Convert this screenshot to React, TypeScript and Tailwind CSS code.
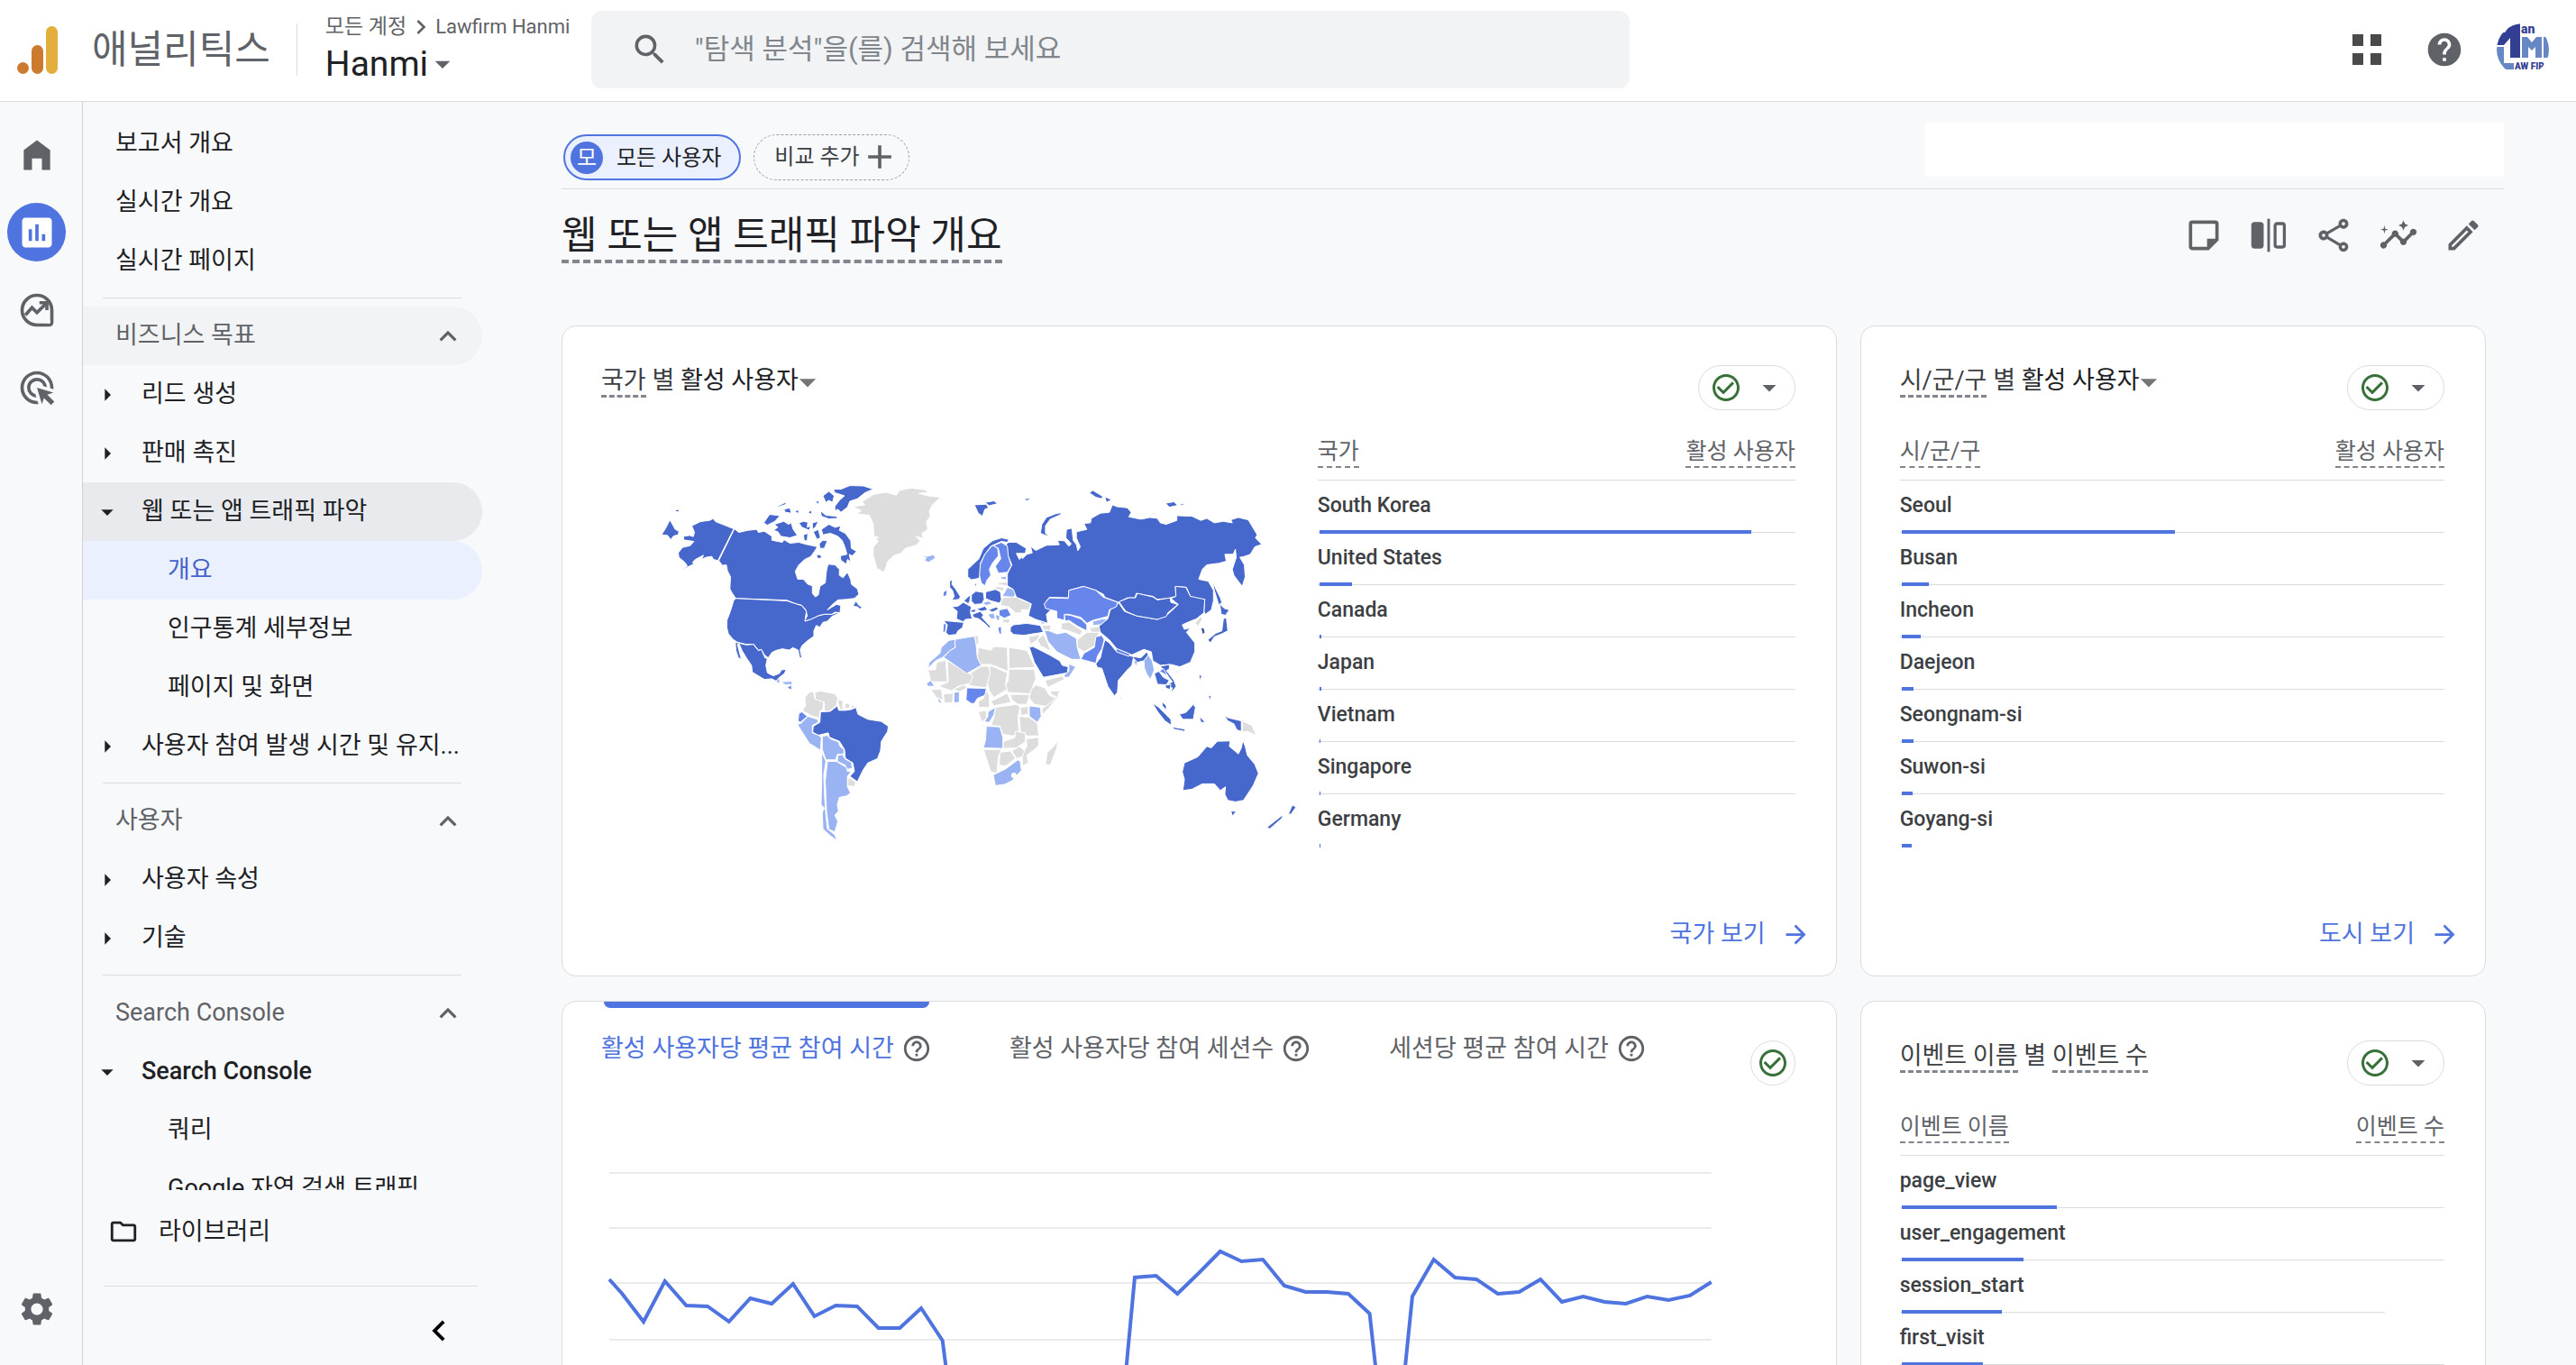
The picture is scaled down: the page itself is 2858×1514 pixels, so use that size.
import type { ReactNode } from 'react';
import {
  MdAdd,
  MdAdsClick,
  MdArrowDropDown,
  MdArrowForward,
  MdArrowRight,
  MdAssessment,
  MdCheckCircleOutline,
  MdChevronLeft,
  MdChevronRight,
  MdExpandLess,
  MdHelp,
  MdHelpOutline,
  MdInsights,
  MdOutlineEdit,
  MdOutlineFolder,
  MdOutlineShare,
  MdSearch,
  MdSettings,
} from 'react-icons/md';

type NavEntry = {
  label: string;
  kind: 'header' | 'group' | 'leaf' | 'top';
  open?: boolean;
  state?: 'selected' | 'parent' | 'hover';
};

type Row = { label: string; bar: number; short?: boolean };

// ── Navigation ──────────────────────────────────────────────────────────────

const NAV: NavEntry[][] = [
  [
    { label: '보고서 개요', kind: 'top' },
    { label: '실시간 개요', kind: 'top' },
    { label: '실시간 페이지', kind: 'top' },
  ],
  [
    { label: '비즈니스 목표', kind: 'header', state: 'hover' },
    { label: '리드 생성', kind: 'group' },
    { label: '판매 촉진', kind: 'group' },
    { label: '웹 또는 앱 트래픽 파악', kind: 'group', open: true, state: 'parent' },
    { label: '개요', kind: 'leaf', state: 'selected' },
    { label: '인구통계 세부정보', kind: 'leaf' },
    { label: '페이지 및 화면', kind: 'leaf' },
    { label: '사용자 참여 발생 시간 및 유지...', kind: 'group' },
  ],
  [
    { label: '사용자', kind: 'header' },
    { label: '사용자 속성', kind: 'group' },
    { label: '기술', kind: 'group' },
  ],
  [
    { label: 'Search Console', kind: 'header' },
    { label: 'Search Console', kind: 'group', open: true },
    { label: '쿼리', kind: 'leaf' },
    { label: 'Google 자연 검색 트래픽', kind: 'leaf' },
  ],
];

// ── Table data, bar = share of the table width in % ─────────────────────────

const COUNTRIES: Row[] = [
  { label: 'South Korea', bar: 90.4 },
  { label: 'United States', bar: 6.8 },
  { label: 'Canada', bar: 0.4 },
  { label: 'Japan', bar: 0.4 },
  { label: 'Vietnam', bar: 0.2 },
  { label: 'Singapore', bar: 0.2 },
  { label: 'Germany', bar: 0.2 },
];

const CITIES: Row[] = [
  { label: 'Seoul', bar: 50.2 },
  { label: 'Busan', bar: 5.1 },
  { label: 'Incheon', bar: 3.5 },
  { label: 'Daejeon', bar: 2.2 },
  { label: 'Seongnam-si', bar: 2.2 },
  { label: 'Suwon-si', bar: 2 },
  { label: 'Goyang-si', bar: 1.8 },
];

const EVENTS: Row[] = [
  { label: 'page_view', bar: 28.6 },
  { label: 'user_engagement', bar: 22.4 },
  { label: 'session_start', bar: 18.5, short: true },
  { label: 'first_visit', bar: 14.9 },
  { label: 'scroll', bar: 9 },
];

const TABS = [
  { label: '활성 사용자당 평균 참여 시간', active: true },
  { label: '활성 사용자당 참여 세션수', active: false },
  { label: '세션당 평균 참여 시간', active: false },
];

const TREND = [
  155, 186, 141, 168, 169, 186, 160, 166, 144, 180, 168, 169, 193, 193, 171, 207,
  390, 390, 390, 390, 390, 390, 390, 390,
  137, 135, 155, 132, 108, 119, 117, 146, 153, 153, 155, 177, 390,
  158, 117, 137, 139, 155, 153, 139, 164, 158, 164, 166, 158, 162, 157, 142,
];

// ── Map shapes ──────────────────────────────────────────────────────────────

const DARK  = '#4667cb';
const MID   = '#6686ec';
const LIGHT = '#9ab3f2';
const NONE  = '#dddddd';

const WEST: [string, string[]][] = [
  [DARK, [
    '130,230 148,262 160,268 158,280 142,284 133,296 122,282 102,280 116,258',
    '148,198 158,195 162,201 150,204',
    '203,250 232,236 262,232 275,226 282,236 343,260 290,366 275,362 270,352 250,355 236,362 242,348 215,362 205,372 212,376 188,388 160,402 188,384 180,372 160,355 158,340 172,322 198,316 210,302 196,300 176,297 176,285 196,282 208,286 212,272',
    '345,260 360,272 390,265 420,262 425,272 445,268 470,285 470,298 505,305 510,296 530,308 560,305 585,312 605,316 622,320 612,335 600,352 580,362 560,380 548,402 556,428 575,428 590,445 605,450 605,475 615,487 625,480 630,452 648,440 650,420 652,400 657,378 680,380 695,395 695,415 707,423 722,405 733,430 735,445 755,460 760,478 745,492 720,495 690,497 672,512 655,530 685,512 700,515 697,540 680,538 670,545 645,545 625,550 600,562 578,568 588,550 583,530 570,515 550,510 520,498 350,492 338,475 330,460 332,420 322,400 318,380 305,382 293,366',
    '350,492 520,500 550,510 570,516 585,535 580,568 600,562 625,550 645,545 670,545 685,540 693,542 670,552 655,568 640,572 630,588 618,582 610,600 610,618 590,632 570,650 564,664 570,690 563,690 557,664 540,656 528,664 505,660 485,665 470,672 458,690 445,680 435,662 425,665 410,645 385,645 355,638 340,628 325,610 320,590 320,565 328,545 338,515 342,500',
    '348,638 385,647 408,645 425,666 435,662 447,690 455,692 450,715 455,740 475,750 495,742 502,730 518,728 512,742 495,755 485,768 470,760 445,762 405,738 402,715 385,690 370,665 362,645 355,645 368,695 358,690 350,665',
    '740,518 750,500 760,515 770,520 765,528 755,520',
    '688,550 720,538 700,546',
    '675,128 700,128 730,116 775,117 808,128 780,140 755,160 730,168 722,188 700,205 690,195 680,200 680,185 695,165 712,150 680,140',
    '640,150 660,135 678,150 672,172 660,165 650,172',
    '443,240 462,212 497,216 480,235 455,248',
    '478,245 510,235 525,245 535,240 540,260 555,282 530,290 500,285 490,270 475,265 490,255',
    '635,262 660,245 680,255 700,250 695,265 715,275 733,300 735,325 752,335 738,350 728,345 733,370 722,362 718,378 700,365 698,350 720,345 715,325 705,300 690,285 665,275 640,280',
    '510,195 530,190 535,208 515,205',
    '488,185 515,172 518,178 492,187',
    '590,205 603,197 602,212',
    '632,200 650,215 685,218 690,225 660,227 635,218',
    '560,240 575,235 590,238 588,255 600,250 595,265 570,255',
    '545,205 558,195 560,208',
    '575,280 590,275 588,300 578,300',
    '605,240 625,235 615,255 605,262',
    '608,270 625,262 632,290 620,295',
    '615,170 628,165 625,178',
    '628,310 640,298 655,300 645,325 630,325',
    '618,350 628,345 638,355 625,360',
    '632,870 665,868 688,850 693,865 715,865 735,862 750,855 757,878 790,895 835,902 858,918 856,935 835,968 832,1000 822,1026 790,1040 775,1062 755,1103 730,1085 745,1068 740,1040 715,1025 712,995 695,968 662,955 658,940 625,948 606,938 608,918 630,905',
  ]],
  [MID, ['520,790 535,780 536,797', '560,875 570,870 588,885 565,905 557,900']],
  [LIGHT, [
    '485,765 495,757 497,772 488,775',
    '500,770 535,768 540,778 515,780',
    '967,348 985,352 1010,346 1015,358 992,372 978,365 985,358',
    '590,885 622,895 625,905 605,915 605,940 625,948 635,955 632,998 595,975 555,912 567,908',
    '638,952 655,948 665,960 692,970 697,985 710,995 710,1010 688,1012 683,1030 650,1030 638,995',
    '690,1015 705,1012 715,1028 735,1038 738,1058 720,1062 715,1048 688,1035',
    '636,1003 650,1035 643,1080 645,1140 648,1190 655,1260 680,1280 688,1300 665,1283 640,1260 638,1205 645,1190 634,1180 636,1100',
    '655,1035 685,1035 718,1055 722,1068 735,1068 722,1085 722,1120 732,1140 720,1150 695,1155 688,1180 692,1200 680,1215 690,1235 680,1270 660,1262 652,1200 648,1100',
  ]],
  [NONE, [
    '740,186 780,180 770,170 810,145 850,138 885,148 895,132 935,124 980,130 992,138 960,142 990,150 1033,155 1005,180 995,200 998,220 985,235 990,262 970,275 975,292 950,285 965,300 950,315 915,325 900,342 875,350 855,370 850,390 842,405 820,392 808,350 808,322 825,300 815,298 825,288 810,285 808,245 795,215 750,210 768,200',
    '598,802 610,805 612,825 642,835 640,862 630,868 628,890 605,885 572,866 582,850 580,822',
    '613,806 630,800 680,810 690,825 685,850 660,868 645,868 645,838 615,828',
    '693,828 708,835 705,850 712,862 698,862 690,840',
    '712,842 730,842 728,858 715,860',
    '733,842 748,855 738,860',
    '725,1088 750,1105 745,1120 722,1115',
  ]],
];

const EAST: [string, string[]][] = [
  [NONE, [
    '203,440 235,436 235,450 205,446',
    '200,452 225,455 220,468 195,460',
    '215,495 225,488 265,488 290,500 315,510 305,530 280,530 285,540 262,540 240,520 212,515',
    '218,562 245,560 240,575 220,572',
    '508,590 545,585 548,605 515,605',
    '415,575 440,570 485,600 478,615 440,600 415,595',
    '468,630 500,605 540,605 525,650 490,670 468,655',
    '335,630 355,612 370,640 380,668 345,650',
    '305,620 345,612 335,630 312,645',
    '360,765 420,750 425,762 370,788',
    '350,582 380,580 378,600 355,595',
    '608,815 617,825 612,830',
    '860,575 880,552 885,560 872,585',
    '1018,900 1050,915 1065,948 1035,935 1018,938',
    '125,618 138,615 140,640 132,650',
    '138,655 180,665 190,652 235,655 237,735 180,712 145,712 135,690',
    '240,655 300,665 328,722 240,725',
    '240,728 325,728 330,760 310,810 235,805 230,780 238,765',
    '178,715 235,740 228,780 235,795 190,822 175,800 168,770',
    '148,718 172,718 178,740 165,790 125,785 105,780 100,750',
    '-30,730 -5,730 0,705 30,698 35,770 -20,770',
    '35,700 120,750 110,775 70,785 50,800 20,790 5,785 38,770',
    '-20,795 15,795 20,830 0,825',
    '55,795 90,780 100,790 75,803',
    '22,810 55,808 52,840 25,840',
    '165,800 175,815 175,855 140,855 138,835 155,825',
    '180,835 235,808 248,838 190,850',
    '245,812 310,812 300,845 270,845 250,830',
    '330,780 360,790 375,815 398,825 365,852 325,845 308,825 315,795',
    '410,800 400,825 375,855 352,880 350,860 385,835 398,820 380,810 380,800',
    '278,855 305,852 305,878 280,882',
    '138,870 165,865 165,890 150,905',
    '195,855 265,845 278,855 270,890 275,945 250,950 220,945 210,918 180,915 190,890',
    '275,885 308,888 335,908 340,950 300,950 278,935',
    '220,970 260,955 262,935 295,940 295,970 265,990 222,992',
    '298,960 340,955 338,985 300,1015 305,1040 285,1050 285,1010 300,985',
    '250,1000 275,985 292,1000 285,1020 265,1025',
    '210,1005 245,1000 262,1025 230,1050 208,1048',
    '155,995 215,995 205,1020 200,1075 180,1070',
    '403,965 400,990 378,1048 362,1045 368,1005 390,985',
  ]],
  [LIGHT, [
    '212,420 232,418 232,430 215,428',
    '218,485 235,455 255,462 262,478 255,488',
    '150,508 172,500 185,510 165,515',
    '170,545 190,540 195,560 180,560',
    '195,545 210,550 208,568 198,562',
    '520,568 550,560 575,562 545,580 520,582',
    '358,598 375,600 400,610 430,605 465,625 468,655 480,695 450,695 420,680 400,670 370,635',
    '440,710 463,720 440,755 425,755 425,745 440,735',
    '305,650 312,650 308,668',
    '335,568 365,572 355,578',
    '655,700 670,698 665,718',
    '690,700 705,680 718,700 725,730 712,762 700,745 692,725',
    '40,632 60,628 62,655 45,665 20,688 -5,700 -30,725 -25,705 10,675 15,655',
    '60,640 62,628 125,618 130,640 135,690 148,715 100,742 22,688 45,665 62,655',
    '-35,775 -20,765 -8,785 -30,785',
    '57,805 75,803 75,838 57,840',
    '3,822 20,842 5,838',
    '308,850 345,855 348,885 335,905 308,885',
    '170,870 195,855 190,880 175,905 158,903 170,885',
    '165,918 210,920 220,955 220,992 155,990 162,965',
    '188,1080 230,1060 270,1030 278,1035 282,1065 250,1100 225,1112 195,1116',
  ]],
  [DARK, [
    '125,180 165,178 172,190 160,195 152,218 138,208',
    '160,172 190,167 203,176 175,183',
    '290,160 315,158 300,167',
    '415,206 412,213 378,228 362,250 362,275 375,287 345,275 350,245 365,222 395,210',
    '508,140 520,132 553,152 550,160 530,155',
    '560,153 583,163 565,172',
    '762,175 790,170 803,182 775,188',
    '810,176 832,178 815,182',
    '240,305 265,305 298,325 295,342 265,342 275,362 285,352 285,360 300,345 318,340 312,318 330,332 365,315 408,313 402,298 425,300 440,318 448,310 430,290 432,262 450,258 455,300 465,312 470,333 478,320 465,290 465,270 500,262 490,242 512,240 515,225 545,208 575,205 585,180 600,186 635,190 648,205 640,220 680,228 710,222 735,225 745,240 765,245 800,232 800,216 850,218 880,232 900,225 925,240 955,235 985,240 980,230 1005,222 1038,230 1068,280 1062,290 1083,312 1060,320 1045,345 1025,352 1010,355 1025,380 1028,420 1018,452 990,415 985,395 998,355 995,328 988,345 960,345 965,368 940,375 900,380 885,395 873,428 905,435 922,465 922,500 915,530 895,545 890,535 893,495 870,500 845,485 832,455 795,452 797,485 770,492 735,495 720,485 690,480 665,475 660,490 635,490 605,505 560,488 555,478 530,465 488,452 440,465 440,490 375,488 358,510 380,530 365,545 370,575 330,562 305,550 315,510 290,498 265,488 255,462 235,450 235,410 250,380 235,345 232,310',
    '918,432 930,460 945,490 950,505 940,515 925,465',
    '103,395 140,360 155,325 185,300 215,290 240,295 235,305 215,302 180,318 160,345 145,375 145,410 140,425 115,430 103,420',
    '163,470 195,462 212,470 215,495 210,508 180,500 162,492',
    '115,480 130,468 155,472 158,495 150,510 125,512 115,500',
    '50,520 70,518 88,505 115,520 112,540 118,560 95,562 88,570 65,560 68,535',
    '22,566 90,572 85,590 70,600 65,612 40,615 30,605 35,580',
    '42,435 52,430 50,445 62,460 78,485 75,495 50,498 58,485 52,465 43,455',
    '90,500 100,490 112,480 110,500 105,510',
    '118,545 145,535 155,548 150,555 178,585 175,592 165,580 140,560 122,555',
    '112,530 130,528 128,538 115,538',
    '130,528 160,518 170,530 150,535',
    '172,530 200,520 205,528 185,538',
    '245,590 255,580 300,575 345,582 355,605 320,610 290,615 255,612 245,602',
    '308,655 320,652 375,680 410,700 418,715 438,720 435,740 355,755 325,705',
    '530,710 545,690 552,660 560,630 575,640 595,665 650,685 680,690 700,670 705,680 690,700 668,705 655,690 650,715 635,730 605,765 602,805 592,817 570,785 555,740 550,725 535,722',
    '540,585 570,560 578,530 600,515 605,505 625,535 665,550 735,562 770,545 805,512 780,492 797,485 795,452 830,455 845,485 893,495 890,540 865,560 840,570 818,580 825,595 845,590 832,605 860,640 860,670 845,705 810,720 780,712 745,715 720,700 715,670 690,662 650,680 600,660 575,630 545,605',
    '607,503 640,490 662,490 668,475 720,487 735,497 778,490 780,505 803,512 770,540 765,552 735,562 665,550 630,535',
    '725,742 740,735 755,755 775,765 765,780 735,778',
    '745,718 775,712 775,728 765,732 790,765 798,785 780,808 785,790 765,785 775,775 785,770 755,730',
    '760,782 780,778 778,795 765,792',
    '750,835 765,850 765,865 752,850',
    '718,840 740,855 765,880 780,895 782,915 760,900 735,868',
    '785,920 828,928 826,935 790,928',
    '808,878 830,872 855,845 862,855 855,895 820,895',
    '875,885 895,905 880,905',
    '958,882 972,890 1015,900 1015,935 1000,930 990,910 970,900',
    '873,745 883,750 878,768',
    '905,815 915,818 910,832',
    '795,738 803,735 798,743',
    '955,560 965,555 970,600 950,610 925,620 912,640 903,630 930,608 950,600',
    '943,510 958,525 975,530 962,548 948,545',
    '820,1132 825,1095 818,1070 825,1040 870,1020 900,985 915,990 935,968 978,967 975,985 1005,1010 1015,990 1020,965 1028,985 1035,1015 1060,1045 1072,1075 1055,1115 1022,1165 995,1170 970,1165 960,1145 962,1120 945,1132 925,1110 885,1110 850,1128',
    '980,1200 998,1202 985,1218',
    '1172,1210 1185,1180 1197,1188 1180,1212',
    '1100,1255 1155,1212 1150,1225 1110,1260',
  ]],
  [MID, [
    '145,378 160,345 185,315 203,325 205,350 185,375 175,395 180,415 168,430 160,450 148,440 142,415',
    '188,316 215,305 235,318 238,350 248,382 235,405 205,408 195,385 213,360 205,325',
    '125,445 132,440 132,455',
    '22,575 32,578 28,605 20,605',
    '22,470 35,463 32,482 20,487',
    '208,530 235,525 248,548 225,558 207,548',
    '203,590 215,585 215,612 208,610',
    '358,510 375,490 438,492 440,465 490,452 530,465 555,488 603,505 598,520 575,530 570,552 520,565 500,575 480,555 440,545 425,545 425,565 400,558 400,535 380,530 362,525',
    '425,546 445,548 480,560 500,580 500,600 470,585 440,565 428,568',
    '480,695 490,675 525,655 530,620 550,615 558,630 550,660 535,685 530,708 500,700',
    '597,658 645,678 640,685 598,670',
    '742,735 755,725 770,750',
    '100,790 165,792 160,815 135,825 125,842 115,842 97,830',
  ]],
  ['#34489c', ['880,590 890,590 894,605 886,613']],
];

function Shapes({ layers }: { layers: [string, string[]][] }) {
  return (
    <>
      {layers.map(([fill, shapes]) => (
        <g key={fill} fill={fill}>
          {shapes.map((points) => <polygon key={points} points={points} />)}
        </g>
      ))}
    </>
  );
}

function WorldMap() {
  return (
    <svg viewBox="-99 0 2388 1380" className="w-full" role="img" aria-label="국가별 활성 사용자 지도">
      <g stroke="#ffffff" strokeWidth="3" strokeLinejoin="round">
        <Shapes layers={WEST} />
        <g transform="translate(1020 0)">
          <Shapes layers={EAST} />
          <circle cx="257" cy="1082" r="8" fill="#ffffff" />
        </g>
      </g>
    </svg>
  );
}

// ── Icons that the icon set lacks ───────────────────────────────────────────

function LogoMark() {
  return (
    <svg viewBox="0 0 45 53" className="h-[53px] w-[45px] shrink-0" aria-hidden="true">
      <rect x="32" y="0" width="13" height="53" rx="6.5" fill="#e4ae3c" />
      <rect x="16" y="21" width="13" height="32" rx="6.5" fill="#cc7a2f" />
      <circle cx="6.5" cy="46.5" r="6.5" fill="#cc7a2f" />
    </svg>
  );
}

function HomeIcon() {
  return (
    <svg viewBox="0 0 24 24" className="size-11" fill="currentColor" aria-hidden="true">
      <path d="M12 3 4 9v12h5v-7h6v7h5V9z" />
    </svg>
  );
}

function ExploreIcon() {
  return (
    <svg viewBox="0 0 24 24" className="size-11" fill="none" stroke="currentColor" strokeWidth="2" aria-hidden="true">
      <path d="M21 12a9 9 0 1 0-9 9h7.500a1.500 1.500 0 0 0 1.500-1.500z" />
      <path d="m5 15 4-4.500 3 3L17.500 8" />
      <path d="M13.500 7.500h4.500V12" />
      <circle cx="19" cy="19" r="1.200" fill="#f8f9fb" stroke="none" />
    </svg>
  );
}

function NoteIcon() {
  return (
    <svg viewBox="0 0 24 24" className="size-11" fill="currentColor" aria-hidden="true">
      <path d="M19 5v9h-5v5H5V5h14m0-2H5a2 2 0 0 0-2 2v14c0 1.100.9 2 2 2h10l6-6V5a2 2 0 0 0-2-2z" />
    </svg>
  );
}

function CompareIcon() {
  return (
    <svg viewBox="0 0 24 24" className="size-11" fill="currentColor" aria-hidden="true">
      <rect x="1.500" y="4" width="7.500" height="16" rx="2" />
      <rect x="11.200" y="2" width="1.600" height="20" />
      <rect x="15.900" y="4.900" width="5.600" height="14.200" rx="1.200" fill="none" stroke="currentColor" strokeWidth="1.800" />
    </svg>
  );
}

function Avatar() {
  return (
    <svg viewBox="0 0 58 58" className="size-[58px]" role="img" aria-label="Hanmi Law Firm">
      <defs>
        <clipPath id="avatar-clip"><circle cx="29" cy="29" r="29" /></clipPath>
      </defs>
      <g clipPath="url(#avatar-clip)">
        <rect width="58" height="58" fill="#ffffff" />
        <path d="M15 2 26 0v38H15V16L8 24H0V10h9z" fill="#333f92" />
        <path d="M0 26h8v18h11v7H0z" fill="#6787c2" />
        <path d="M28 15h6l5 6 5-6h6v23h-7V26l-4 4-4-4v12h-7zM52 15h6v23h-6z" fill="#6787c2" />
        <text x="27" y="11" className="font-['Roboto',sans-serif] text-[14px] font-black" fill="#333f92">an</text>
        <text x="20" y="51" className="font-['Roboto',sans-serif] text-[10px] font-black" fill="#333f92">AW FIR</text>
      </g>
    </svg>
  );
}

// ── Layout parts ────────────────────────────────────────────────────────────

function TopBar() {
  return (
    <header className="flex h-[113px] shrink-0 items-center border-b border-[#dadce0] bg-white pr-[30px] pb-0.5 pl-[19px]">
      <LogoMark />
      <span className="ml-[38px] shrink-0 text-[43px] leading-[54px] text-[#5f6368]">애널리틱스</span>
      <div className="mr-[31px] ml-[29px] h-[58px] w-px bg-[#dadce0]" />
      <div className="w-[295px] shrink-0 whitespace-nowrap">
        <div className="flex items-center text-[23px] leading-7 text-[#5f6368]">
          모든 계정
          <MdChevronRight className="size-8" />
          <span className="text-[22px]">Lawfirm Hanmi</span>
        </div>
        <button className="flex items-center text-[39px] leading-[50px] text-[#202124]">
          Hanmi
          <MdArrowDropDown className="size-10 -ml-1 text-[#5f6368]" />
        </button>
      </div>
      <label className="flex h-[86px] max-w-[1152px] flex-1 items-center rounded-xl bg-[#f1f3f4] px-[43px]">
        <MdSearch className="size-11 text-[#5f6368]" />
        <input
          type="search"
          aria-label="검색"
          placeholder={'"탐색 분석"을(를) 검색해 보세요'}
          className="ml-7 flex-1 bg-transparent text-[31px] outline-none placeholder:text-[#80868b]"
        />
      </label>
      <div className="ml-auto flex items-center">
        <button aria-label="앱" className="mr-12">
          <svg viewBox="0 0 32 34" className="h-[34px] w-8" fill="#4a4a4a" aria-hidden="true">
            <path d="M0 0h12v13H0zM20 0h12v13H20zM0 21h12v13H0zM20 21h12v13H20z" />
          </svg>
        </button>
        <button aria-label="도움말" className="mr-9"><MdHelp className="size-11 text-[#5f6368]" /></button>
        <button aria-label="계정"><Avatar /></button>
      </div>
    </header>
  );
}

function Rail() {
  return (
    <nav className="flex w-[92px] shrink-0 flex-col items-center border-r border-[#cfd1d4] pt-[26px] pr-2.5 pb-[30px] text-[#5f6368]">
      <a href="#home" aria-label="홈" className="flex size-[65px] items-center justify-center"><HomeIcon /></a>
      <a href="#reports" aria-label="보고서" className="mt-[21px] flex size-[65px] items-center justify-center rounded-full bg-[#4f73df] text-white">
        <MdAssessment className="size-11" />
      </a>
      <a href="#explore" aria-label="탐색" className="mt-[21px] flex size-[65px] items-center justify-center"><ExploreIcon /></a>
      <a href="#ads" aria-label="광고" className="mt-[21px] flex size-[65px] items-center justify-center"><MdAdsClick className="size-11" /></a>
      <a href="#admin" aria-label="관리" className="mt-auto flex size-[65px] items-center justify-center"><MdSettings className="size-11" /></a>
    </nav>
  );
}

const ROW_STATE = {
  hover: 'bg-[#f1f3f4]',
  parent: 'bg-[#e8eaed]',
  selected: 'bg-[#eaf0fd] text-[#4563cb]',
};

function NavRow({ entry }: { entry: NavEntry }) {
  const tone = entry.kind === 'header' ? 'text-[#5f6368]' : '';
  const state = entry.state ? ROW_STATE[entry.state] : '';
  const base = 'flex h-[65px] w-full items-center rounded-r-full text-left pr-[19px]';

  if (entry.kind === 'header') {
    return (
      <button className={`${base} justify-between pl-9 ${tone} ${state}`}>
        {entry.label}
        <MdExpandLess className="size-[38px] shrink-0" />
      </button>
    );
  }
  if (entry.kind === 'group') {
    return (
      <button className={`${base} pl-[11px] ${state}`}>
        {entry.open ? <MdArrowDropDown className="size-8 shrink-0" /> : <MdArrowRight className="size-8 shrink-0" />}
        <span className={entry.label === 'Search Console' ? 'ml-[22px] whitespace-nowrap font-medium' : 'ml-[22px] whitespace-nowrap'}>
          {entry.label}
        </span>
      </button>
    );
  }
  return (
    <a href="#report" className={`${base} ${entry.kind === 'top' ? 'pl-9' : 'pl-[94px]'} ${state}`}>
      {entry.label}
    </a>
  );
}

function SideNav() {
  return (
    <aside className="flex w-[443px] shrink-0 flex-col text-[27px] text-[#202124]">
      <div className="min-h-0 flex-1 overflow-hidden pt-3.5">
        {NAV.map((section, i) => (
          <div key={i}>
            {i > 0 && <div className="mt-2 mr-[23px] mb-[9px] ml-[22px] h-px bg-[#dadce0]" />}
            {section.map((entry, j) => <NavRow key={j} entry={entry} />)}
          </div>
        ))}
      </div>
      <a href="#library" className="flex h-[92px] shrink-0 items-center pl-[28px]">
        <MdOutlineFolder className="size-[34px]" />
        <span className="ml-[22px]">라이브러리</span>
      </a>
      <div className="mt-3.5 mr-[5px] ml-[23px] flex h-[88px] shrink-0 justify-end border-t border-[#dadce0] pt-[25px] pr-5">
        <button aria-label="메뉴 접기" className="h-12 text-black"><MdChevronLeft className="size-[46px]" /></button>
      </div>
    </aside>
  );
}

function StatusPill({ caret = true }: { caret?: boolean }) {
  return (
    <button
      aria-label="데이터 품질"
      className={`flex h-[50px] shrink-0 items-center rounded-full border border-[#dadce0] ${caret ? 'w-[108px] justify-between pr-2.5 pl-3' : 'w-[50px] justify-center'}`}
    >
      <MdCheckCircleOutline className="size-9 text-[#377038]" />
      {caret && <MdArrowDropDown className="size-9 text-[#5f6368]" />}
    </button>
  );
}

function Dashed({ children }: { children: ReactNode }) {
  return <span className="inline-block border-b-3 border-dashed border-[#80868b] leading-8">{children}</span>;
}

function Card({ wide, children }: { wide?: boolean; children: ReactNode }) {
  return (
    <section className={`flex min-h-[722px] flex-col overflow-hidden rounded-2xl border border-[#dadce0] bg-white ${wide ? 'col-span-2' : ''}`}>
      {children}
    </section>
  );
}

function CardHead({ children }: { children: ReactNode }) {
  return (
    <div className="flex items-start justify-between pt-[43px] pr-[45px] pl-[43px]">
      <h2 className="mt-px flex items-start text-[27px] leading-8 whitespace-pre text-[#3c4043]">{children}</h2>
      <StatusPill />
    </div>
  );
}

function MetricTable({ dimension, metric, rows }: { dimension: string; metric: string; rows: Row[] }) {
  return (
    <table className="w-full">
      <thead className="text-[25px] text-[#5f6368]">
        <tr className="border-b border-[#dadce0]">
          <th className="pb-[13px] text-left font-normal">
            <span className="block w-max border-b-2 border-dashed border-[#80868b] leading-8">{dimension}</span>
          </th>
          <th className="pb-[13px] text-right font-normal">
            <span className="ml-auto block w-max border-b-2 border-dashed border-[#80868b] leading-8">{metric}</span>
          </th>
        </tr>
      </thead>
      <tbody className="text-[23px] font-medium text-[#3c4043]">
        {rows.map((row, i) => (
          <tr key={row.label}>
            <td colSpan={2} className="p-0">
              <div className="flex h-[57px] items-center">{row.label}</div>
              <div className="relative h-px">
                {i < rows.length - 1 && <div className={`h-px bg-[#dadce0] ${row.short ? 'w-[89%]' : 'w-full'}`} />}
                <div className="absolute -top-0.5 left-0.5 h-1 bg-[#4f73df]" style={{ width: `${row.bar}%` }} />
              </div>
            </td>
          </tr>
        ))}
      </tbody>
    </table>
  );
}

function CardLink({ children }: { children: ReactNode }) {
  return (
    <a href="#more" className="mt-auto mr-7 mb-7 flex items-center self-end text-[27px] leading-9 text-[#4f73df]">
      {children}
      <MdArrowForward className="ml-[17px] size-[33px]" />
    </a>
  );
}

function TrendChart() {
  const points = ['9,139', ...TREND.map((y, i) => `${(23.3 + i * 23.7).toFixed(1)},${y}`)].join(' ');
  return (
    <svg viewBox="0 0 1327 400" className="w-full" role="img" aria-label="평균 참여 시간 추이">
      {[21, 82, 143, 206, 268, 330].map((y) => (
        <path key={y} d={`M9 ${y}H1232`} stroke="#ebebeb" strokeWidth="2" />
      ))}
      <polyline points={points} fill="none" stroke="#4f73df" strokeWidth="4" />
    </svg>
  );
}

function Toolbar() {
  return (
    <div className="flex h-[97px] items-start justify-between border-b border-[#dadce0] pt-[23px] pl-0.5">
      <div className="mt-[13px] flex gap-3.5 text-[24px]">
        <button className="flex h-[51px] items-center rounded-full border-2 border-[#4f73df] bg-[#eaf0fd] pr-5 pl-1.5 text-[#202124]">
          <span className="flex size-9 items-center justify-center rounded-full bg-[#4f73df] text-white">모</span>
          <span className="ml-[15px]">모든 사용자</span>
        </button>
        <button className="flex h-[51px] items-center rounded-full border border-dashed border-[#9aa0a6] pr-2.5 pb-0.5 pl-[22px] text-[#3c4043]">
          비교 추가
          <MdAdd className="size-11 text-[#5f6368]" />
        </button>
      </div>
      <div className="h-[60px] w-[642px] bg-white" />
    </div>
  );
}

export default function App() {
  return (
    <div className="flex h-screen flex-col overflow-hidden bg-[#f8f9fb] font-['Roboto','Noto_Sans_CJK_KR',sans-serif] text-[#202124]">
      <TopBar />
      <div className="flex min-h-0 flex-1">
        <Rail />
        <SideNav />

        <main className="min-w-0 flex-1 overflow-hidden pr-20 pl-[88px]">
          <Toolbar />

          <div className="mt-6 flex items-start justify-between pr-[23px]">
            <h1 className="border-b-4 border-dashed border-[#80868b] text-[43px] leading-[54px]">
              웹 또는 앱 트래픽 파악 개요
            </h1>
            <div className="mt-[5px] flex gap-7 text-[#5f6368]">
              <button aria-label="메모"><NoteIcon /></button>
              <button aria-label="비교"><CompareIcon /></button>
              <button aria-label="공유"><MdOutlineShare className="size-11" /></button>
              <button aria-label="통계"><MdInsights className="size-11" /></button>
              <button aria-label="수정"><MdOutlineEdit className="size-11" /></button>
            </div>
          </div>

          <div className="mt-[69px] mr-5 grid grid-cols-3 gap-x-[26px] gap-y-[27px]">
            <Card wide>
              <CardHead>
                <Dashed>국가</Dashed> 별 <span className="text-[#202124]">활성 사용자</span>
                <MdArrowDropDown className="-mx-3 -my-1 size-11 text-[#757575]" />
              </CardHead>
              <div className="grid grid-cols-[3fr_2fr] items-start pt-[30px] pr-[45px] pl-[43px]">
                <div className="pt-[15px]"><WorldMap /></div>
                <MetricTable dimension="국가" metric="활성 사용자" rows={COUNTRIES} />
              </div>
              <CardLink>국가 보기</CardLink>
            </Card>

            <Card>
              <CardHead>
                <Dashed>시/군/구</Dashed> 별 <span className="text-[#202124]">활성 사용자</span>
                <MdArrowDropDown className="-mx-3 -my-1 size-11 text-[#757575]" />
              </CardHead>
              <div className="pt-[30px] pr-[45px] pl-[43px]">
                <MetricTable dimension="시/군/구" metric="활성 사용자" rows={CITIES} />
              </div>
              <CardLink>도시 보기</CardLink>
            </Card>

            <Card wide>
              <div className="flex items-start justify-between pr-[45px] pl-[43px]">
                <div className="flex gap-[86px]">
                  {TABS.map((tab) => (
                    <button key={tab.label} className="flex flex-col text-[27px] leading-9">
                      <span className={`mx-[3px] h-[7px] self-stretch rounded-b-lg ${tab.active ? 'bg-[#4f73df]' : ''}`} />
                      <span className={`mt-[27px] flex items-center ${tab.active ? 'text-[#4f73df]' : 'text-[#5f6368]'}`}>
                        {tab.label}
                        <MdHelpOutline className="ml-2 size-[34px] text-[#5f6368]" />
                      </span>
                    </button>
                  ))}
                </div>
                <div className="pt-[43px]"><StatusPill caret={false} /></div>
              </div>
              <div className="px-[43px] pt-[76px]"><TrendChart /></div>
            </Card>

            <Card>
              <CardHead>
                <Dashed>이벤트 이름</Dashed> 별 <Dashed>이벤트 수</Dashed>
              </CardHead>
              <div className="pt-[30px] pr-[45px] pl-[43px]">
                <MetricTable dimension="이벤트 이름" metric="이벤트 수" rows={EVENTS} />
              </div>
            </Card>
          </div>
        </main>
      </div>
    </div>
  );
}
